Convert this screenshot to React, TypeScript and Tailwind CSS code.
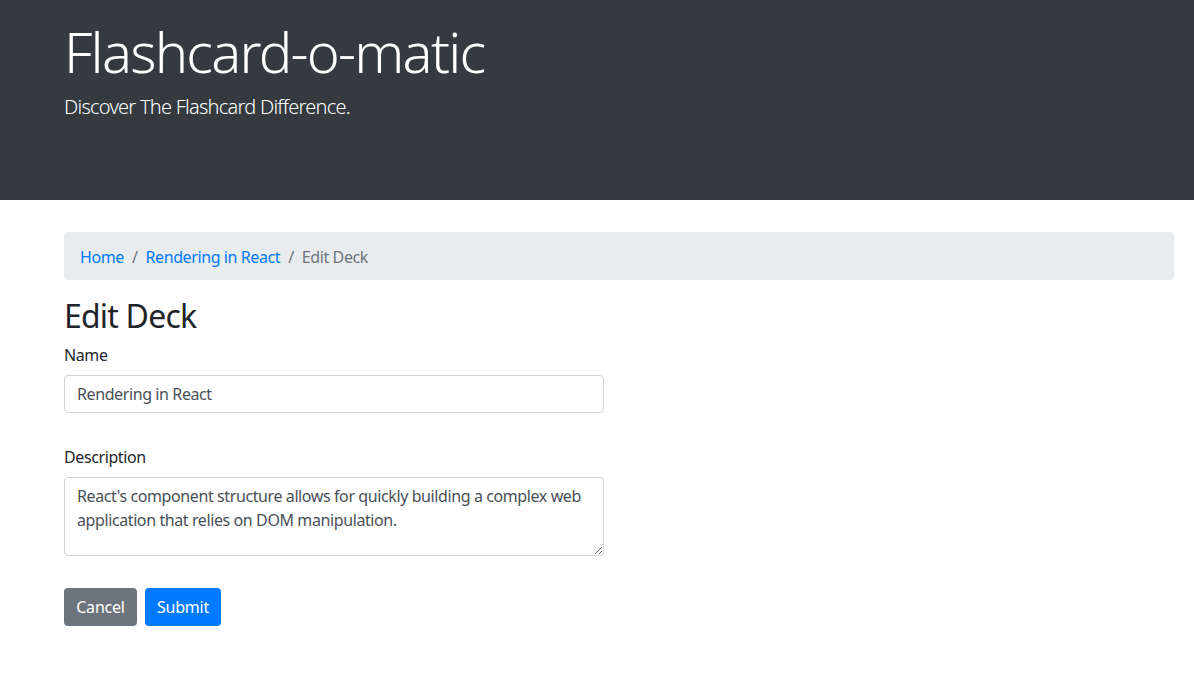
import React from "react"

const font = { fontFamily: '"Segoe UI", "Noto Sans", "Open Sans", sans-serif' }

export default function App() {
  return (
    <div className="min-h-[684px] bg-white text-[#212529] tracking-[-0.4px]" style={font}>
      {/* Header */}
      <div className="bg-[#343a40] h-[200px] pl-[64px] pt-[18px]">
        <h1 className="text-[56px] font-light leading-[1.2] text-white tracking-[-1.75px]">
          Flashcard-o-matic
        </h1>
        <p className="text-[20px] font-light text-white mt-[7px] tracking-[-0.75px]">
          Discover The Flashcard Difference.
        </p>
      </div>

      <div className="pl-[64px] pr-[20px] pt-[32px]">
        {/* Breadcrumb */}
        <nav className="bg-[#e9ecef] rounded-[4px] h-[48px] px-4 pt-[2px] flex items-center text-[16px] mb-4">
          <a className="text-[#007bff]">Home</a>
          <span className="text-[#6c757d] px-2">/</span>
          <a className="text-[#007bff]">Rendering in React</a>
          <span className="text-[#6c757d] px-2">/</span>
          <span className="text-[#6c757d]">Edit Deck</span>
        </nav>

        <h2 className="text-[32px] leading-[1.2] mb-2 pt-px font-normal tracking-[-0.8px]">Edit Deck</h2>

        <form className="w-[540px]">
          <div className="mb-4">
            <label className="block text-[16px] leading-6 mb-2">Name</label>
            <input
              className="w-full h-[38px] border border-[#ced4da] rounded-[4px] px-3 text-[16px] text-[#495057] outline-none tracking-[-0.4px]"
              defaultValue="Rendering in React"
            />
          </div>
          <div className="mt-[32px] mb-4">
            <label className="block text-[16px] leading-6 mb-2">Description</label>
            <textarea
              className="w-full h-[79px] border border-[#ced4da] rounded-[4px] px-3 py-[6px] text-[16px] leading-6 text-[#495057] outline-none block tracking-[-0.4px]"
              defaultValue="React's component structure allows for quickly building a complex web application that relies on DOM manipulation."
            />
          </div>
          <div className="pt-4 flex gap-2">
            <button type="button" className="h-[38px] w-[73px] rounded-[4px] bg-[#6c757d] text-white text-[16px] tracking-[-0.2px]">
              Cancel
            </button>
            <button type="button" className="h-[38px] w-[76px] rounded-[4px] bg-[#007bff] text-white text-[16px] tracking-[-0.2px]">
              Submit
            </button>
          </div>
        </form>
      </div>
    </div>
  )
}
